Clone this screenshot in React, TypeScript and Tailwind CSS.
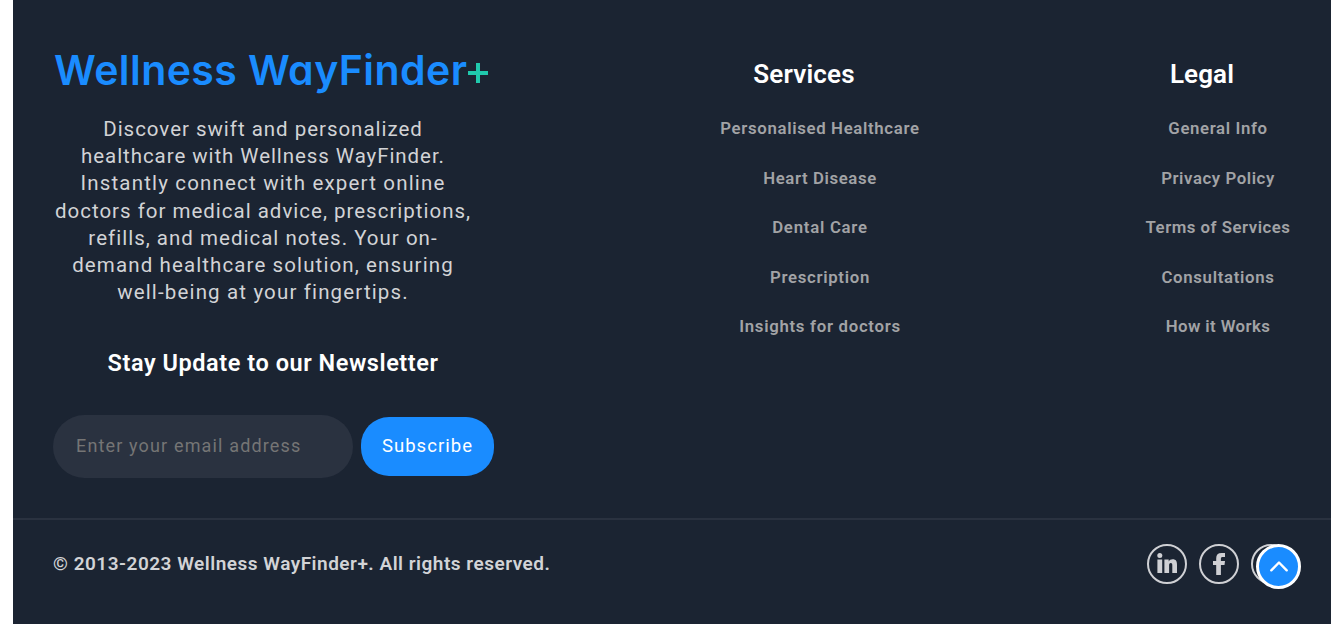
const description = [
  { text: "Discover swift and personalized", tracking: "tracking-[0.97px]" },
  { text: "healthcare with Wellness WayFinder.", tracking: "tracking-[0.93px]" },
  { text: "Instantly connect with expert online", tracking: "tracking-[1.17px]" },
  { text: "doctors for medical advice, prescriptions,", tracking: "tracking-[0.99px]" },
  { text: "refills, and medical notes. Your on-", tracking: "tracking-[1.01px]" },
  { text: "demand healthcare solution, ensuring", tracking: "tracking-[1.11px]" },
  { text: "well-being at your fingertips.", tracking: "tracking-[1.15px]" },
];

const services = [
  { text: "Personalised Healthcare", tracking: "tracking-[0.66px]" },
  { text: "Heart Disease", tracking: "tracking-[0.6px]" },
  { text: "Dental Care", tracking: "tracking-[0.74px]" },
  { text: "Prescription", tracking: "tracking-[0.68px]" },
  { text: "Insights for doctors", tracking: "tracking-[0.7px]" },
];

const legal = [
  { text: "General Info", tracking: "tracking-[0.62px]" },
  { text: "Privacy Policy", tracking: "tracking-[0.57px]" },
  { text: "Terms of Services", tracking: "tracking-[0.51px]" },
  { text: "Consultations", tracking: "tracking-[0.67px]" },
  { text: "How it Works", tracking: "tracking-[0.42px]" },
];

type Line = { text: string; tracking: string };

function LinkColumn({ title, titleClass, links }: { title: string; titleClass: string; links: Line[] }) {
  return (
    <div className="flex w-[232px] flex-col items-center pt-[58px]">
      <h3 className={`text-[26px] leading-[32px] font-semibold text-white ${titleClass}`}>{title}</h3>
      <ul className="mt-[14px] flex flex-col items-center pl-8">
        {links.map((l) => (
          <li key={l.text} className="text-[16.8px] font-semibold text-[#a2a3a6]">
            <a href="#" className={`block h-[49.5px] leading-[49.5px] whitespace-nowrap ${l.tracking}`}>{l.text}</a>
          </li>
        ))}
      </ul>
    </div>
  );
}

export default function App() {
  return (
    <div className="h-[636px] overflow-hidden bg-white pr-[3px] pl-[13px] font-[Roboto,sans-serif]">
      <footer className="flex h-[624px] flex-col bg-[#1b2432]">
        <div className="flex h-[518px] shrink-0 pl-10">
          <div className="w-[440px] shrink-0">
            <h2 className="mt-[43px] flex h-[54px] items-center pl-[1px] font-[Inter,sans-serif] text-[41px] leading-[54px] font-[570] whitespace-nowrap text-[#1a8cff]">
              <span className="tracking-[0.42px] [font-feature-settings:'cv11']">Wellness WayFinder</span>
              <svg viewBox="0 0 20 20" className="mt-[5px] ml-[1px] h-5 w-5 shrink-0 fill-[#20c9ad]">
                <path d="M8 0h4v8h8v4h-8v8H8v-8H0V8h8z" />
              </svg>
            </h2>
            <p className="mt-[19px] w-[420px] text-center text-[20.5px] leading-[27.2px] text-[#d2d3d6]">
              {description.map((l) => (
                <span key={l.text} className={`block whitespace-nowrap ${l.tracking}`}>{l.text}</span>
              ))}
            </p>
            <h3 className="mt-[41px] text-center text-[23.5px] leading-[32px] font-semibold whitespace-nowrap text-white">
              <span className="tracking-[0.55px]">Stay Update to our Newsletter</span>
            </h3>
            <form className="mt-[36px] flex items-center gap-2">
              <input
                type="email"
                placeholder="Enter your email address"
                className="h-[63px] w-[300px] shrink-0 rounded-[32px] bg-[#2a3240] px-[23px] pb-[2px] text-[18px] tracking-[1.15px] outline-none placeholder:text-[#757575]"
              />
              <button type="button" className="h-[59px] w-[133px] shrink-0 rounded-[28px] bg-[#1a8cff] text-[18.5px] tracking-[1.05px] text-white">
                Subscribe
              </button>
            </form>
          </div>
          <div className="ml-[195px] flex gap-[166px]">
            <LinkColumn title="Services" titleClass="tracking-[0.2px]" links={services} />
            <LinkColumn title="Legal" titleClass="tracking-[0.1px]" links={legal} />
          </div>
        </div>
        <div className="flex grow items-start justify-between border-t-2 border-[#2a3240] pr-10 pl-10">
          <p className="mt-[30px] text-[19px] leading-[28px] font-semibold tracking-[0.5px] whitespace-nowrap text-[#d2d3d6]">
            © 2013-2023 Wellness WayFinder+. All rights reserved.
          </p>
          <div className="relative mt-6 flex gap-3">
            <a href="#" className="flex h-10 w-10 items-center justify-center rounded-full border-2 border-[#cfd0d4] text-[#cfd0d4]">
              <svg viewBox="0 0 20 20" className="-mt-[2px] h-5 w-5 fill-current">
                <circle cx="2.8" cy="2.6" r="2.5" />
                <path d="M.4 6.6h4.8V20H.4zM7.4 6.6h4.3v1.8c.7-1.2 2.2-2.1 3.9-2.1 3.5 0 4.4 2.2 4.4 5.5V20h-4.7v-7.2c0-1.6-.2-2.7-1.5-2.7-1.4 0-1.7 1.1-1.7 2.6V20H7.4z" />
              </svg>
            </a>
            <a href="#" className="flex h-10 w-10 items-center justify-center rounded-full border-2 border-[#cfd0d4] text-[#cfd0d4]">
              <svg viewBox="0 0 12 22" className="h-[22px] w-3 fill-current">
                <path d="M3.2 22V12H0V8h3.2V5.3C3.2 1.8 5 0 8.5 0H12v3.9H9.8C8.4 3.9 7.9 4.5 7.9 5.8V8H12l-.5 4H7.9v10z" />
              </svg>
            </a>
            <a href="#" className="h-10 w-10 rounded-full border-2 border-[#cfd0d4]" />
            <button type="button" className="absolute top-0 -right-[10px] flex h-[45px] w-[45px] items-center justify-center rounded-full border-3 border-white bg-[#1a8cff]">
              <svg viewBox="0 0 18 11" className="h-[11px] w-[18px] fill-none stroke-white stroke-[2.4]">
                <path d="M1.3 9.3L9 1.5l7.7 7.8" strokeLinecap="round" strokeLinejoin="round" />
              </svg>
            </button>
          </div>
        </div>
      </footer>
    </div>
  );
}
